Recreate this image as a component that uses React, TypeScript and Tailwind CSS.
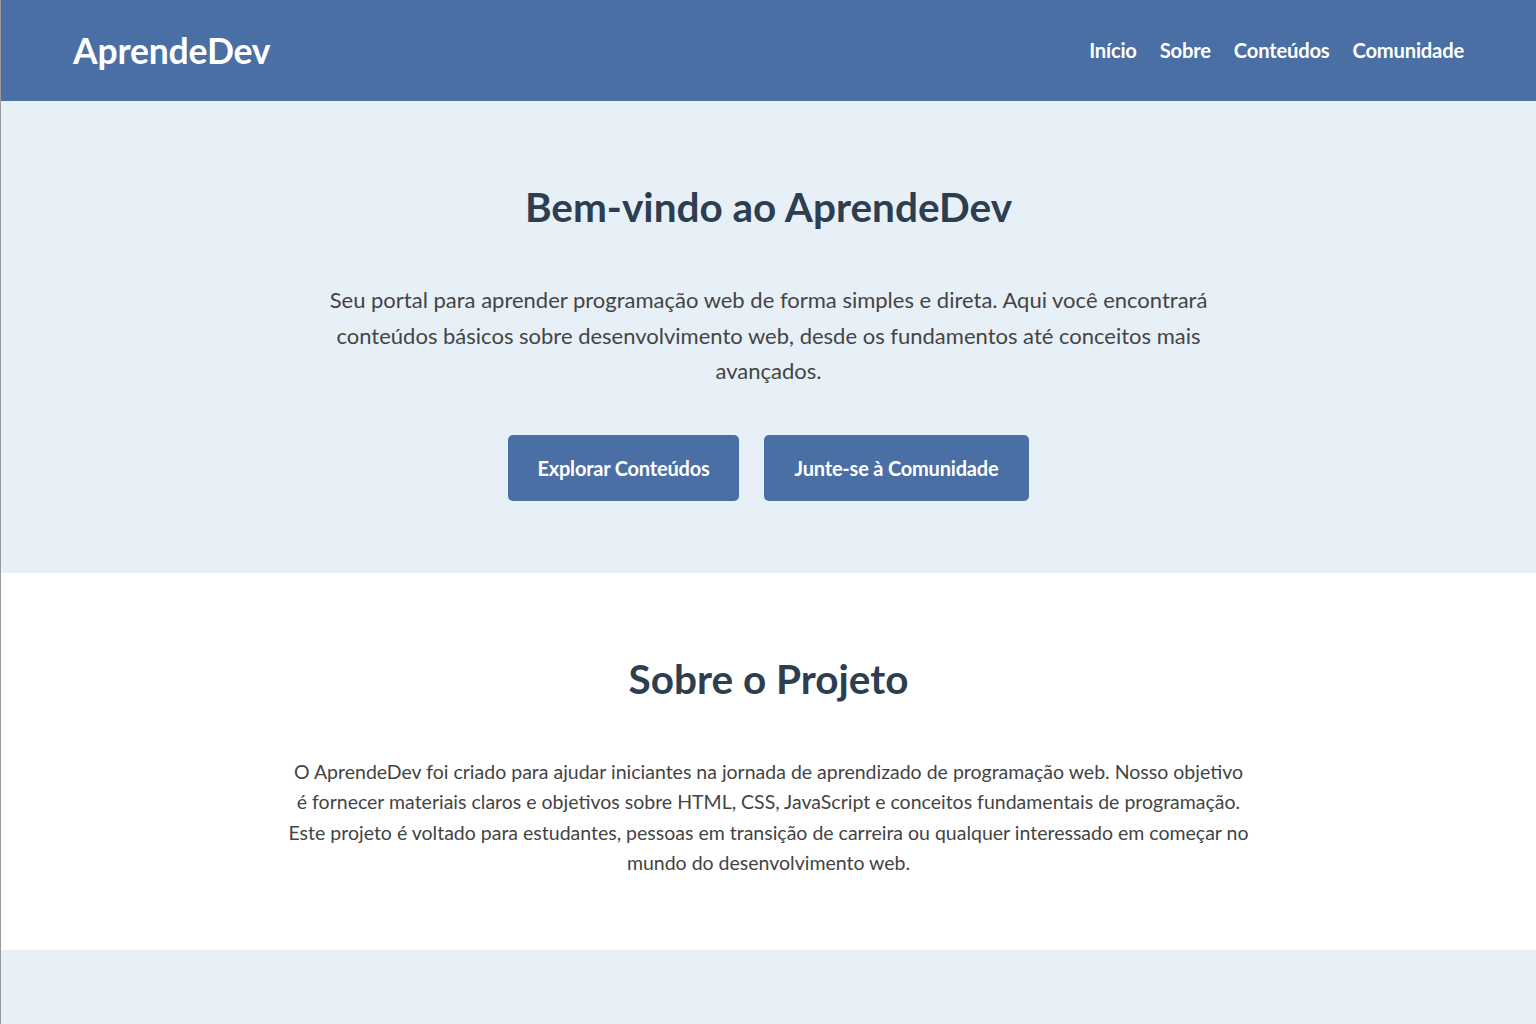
import React from 'react';

const NAV_LINKS = ['Início', 'Sobre', 'Conteúdos', 'Comunidade'];

const App: React.FC = () => {
  return (
    <div
      className="min-h-screen bg-white border-l border-[#9a9a9a]"
      style={{ fontFamily: 'Lato, "Open Sans", sans-serif' }}
    >
      {/* Header */}
      <header className="h-[101px] bg-[#4a6fa5] px-[72px] flex items-center justify-between">
        <h1 className="text-[35.5px] font-bold text-white tracking-[-0.005em]">AprendeDev</h1>
        <nav className="flex items-center gap-[23px]">
          {NAV_LINKS.map((link) => (
            <a key={link} href="#" className="text-[20.2px] font-bold text-white tracking-[-0.01em]">
              {link}
            </a>
          ))}
        </nav>
      </header>

      {/* Hero */}
      <section className="bg-[#e8f0f7] pt-[83px] pb-[72px] px-5 text-center">
        <h2 className="text-[40.5px] leading-[46px] font-bold text-[#2c3e50]">Bem-vindo ao AprendeDev</h2>
        <p className="mt-[52px] mx-auto max-w-[915px] text-[22px] leading-[35.5px] text-[#444]">
          Seu portal para aprender programação web de forma simples e direta. Aqui você encontrará conteúdos básicos
          sobre desenvolvimento web, desde os fundamentos até conceitos mais avançados.
        </p>
        <div className="mt-[46px] flex justify-center gap-[25px]">
          <a href="#" className="h-[66px] w-[231px] flex items-center justify-center rounded-[5px] bg-[#4a6fa5] text-white text-[20px] font-bold tracking-[-0.01em]">
            Explorar Conteúdos
          </a>
          <a href="#" className="h-[66px] w-[265px] flex items-center justify-center rounded-[5px] bg-[#4a6fa5] text-white text-[20px] font-bold tracking-[-0.01em]">
            Junte-se à Comunidade
          </a>
        </div>
      </section>

      {/* Sobre */}
      <section className="bg-white pt-[83px] pb-[71px] px-5 text-center">
        <h2 className="text-[40.5px] leading-[46px] font-bold text-[#2c3e50]">Sobre o Projeto</h2>
        <p className="mt-[55px] mx-auto max-w-[1000px] text-[19.5px] leading-[30.5px] text-[#444]">
          O AprendeDev foi criado para ajudar iniciantes na jornada de aprendizado de programação web. Nosso objetivo
          <br />
          é fornecer materiais claros e objetivos sobre HTML, CSS, JavaScript e conceitos fundamentais de programação.
          <br />
          Este projeto é voltado para estudantes, pessoas em transição de carreira ou qualquer interessado em começar no
          <br />
          mundo do desenvolvimento web.
        </p>
      </section>

      {/* Próxima seção */}
      <section className="bg-[#e8f0f7] h-[200px]" />
    </div>
  );
};

export default App;
